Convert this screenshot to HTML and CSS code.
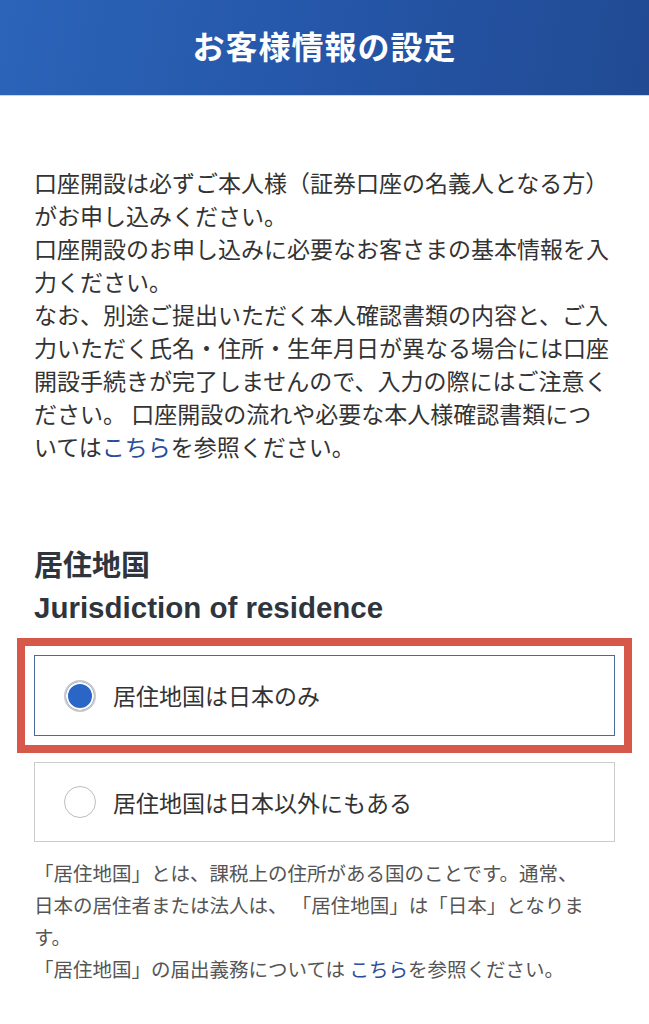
FILE: index.html
```html
<!DOCTYPE html>
<html lang="ja">
<head>
<meta charset="utf-8">
<title>お客様情報の設定</title>
<link rel="stylesheet" href="styles.css">
</head>
<body>
<header class="page-header">
  <h1 class="page-title">お客様情報の設定</h1>
</header>
<main class="content">
  <p class="intro">口座開設は必ずご本人様（証券口座の名義人となる方）がお申し込みください。<br>口座開設のお申し込みに必要なお客さまの基本情報を入力ください。<br>なお、別途ご提出いただく本人確認書類の内容と、ご入力いただく氏名・住所・生年月日が異なる場合には口座開設手続きが完了しませんので、入力の際にはご注意ください。 口座開設の流れや必要な本人様確認書類については<a class="link" href="#">こちら</a>を参照ください。</p>

  <section class="field">
    <h2 class="field-title">居住地国</h2>
    <h3 class="field-subtitle">Jurisdiction of residence</h3>

    <div class="options">
      <label class="option option-selected">
        <span class="radio radio-on"></span>
        <span class="option-label">居住地国は日本のみ</span>
      </label>
      <label class="option">
        <span class="radio"></span>
        <span class="option-label">居住地国は日本以外にもある</span>
      </label>
    </div>

    <p class="note">「居住地国」とは、課税上の住所がある国のことです。通常、日本の居住者または法人は、 「居住地国」は「日本」となります。<br>「居住地国」の届出義務については <a class="link" href="#">こちら</a>を参照ください。</p>
  </section>
</main>
</body>
</html>
```
FILE: styles.css
```css
html, body {
  margin: 0;
  padding: 0;
  background: #ffffff;
}

body {
  font-family: "Noto Sans CJK JP", "Noto Sans", sans-serif;
  color: #333333;
}

.page-header {
  height: 96px;
  display: flex;
  align-items: center;
  justify-content: center;
  background: linear-gradient(100deg, #2b64b9 0%, #2556a8 50%, #214a93 100%);
  border-bottom: 1px solid #c9d6e6;
  box-sizing: border-box;
}

.page-title {
  margin: 0;
  color: #ffffff;
  font-size: 32px;
  font-weight: 700;
  letter-spacing: 1px;
  line-height: 1;
  padding-bottom: 6px;
}

.content {
  padding: 0 34px 40px 34px;
}

.intro {
  margin: 70px 0 0 0;
  width: 578px;
  font-size: 23px;
  line-height: 33px;
  color: #333333;
}

.link {
  display: inline-block;
  color: #2a4c9a;
  text-decoration: none;
}

.field {
  margin-top: 80px;
}

.field-title {
  margin: 0;
  font-size: 29px;
  line-height: 40px;
  font-weight: 700;
  color: #2f353d;
}

.field-subtitle {
  margin: 5px 0 0 0;
  font-family: "Liberation Sans", Arial, sans-serif;
  font-size: 29.5px;
  line-height: 40px;
  font-weight: 700;
  color: #2f353d;
}

.options {
  margin-top: 27px;
  display: flex;
  flex-direction: column;
  gap: 26px;
}

.option {
  display: flex;
  align-items: center;
  gap: 17px;
  height: 80px;
  padding-left: 29px;
  border: 1px solid #cccccc;
  box-sizing: border-box;
  background: #ffffff;
}

.option-selected {
  height: 81px;
  border: 1.5px solid #4a6997;
  outline: 8px solid #d6584a;
  outline-offset: 9px;
}

.radio {
  width: 32px;
  height: 32px;
  border-radius: 50%;
  border: 1.5px solid #bdbdbd;
  box-sizing: border-box;
  background: #ffffff;
  flex: none;
}

.radio-on {
  border: 2px solid #c9c9c9;
  background: #2a66c6;
  box-shadow: inset 0 0 0 2px #ffffff;
}

.option-label {
  font-size: 23px;
  line-height: 33px;
  color: #333333;
}

.note {
  margin: 15px 0 0 0;
  width: 560px;
  font-size: 19.5px;
  line-height: 32px;
  color: #555555;
}
```
